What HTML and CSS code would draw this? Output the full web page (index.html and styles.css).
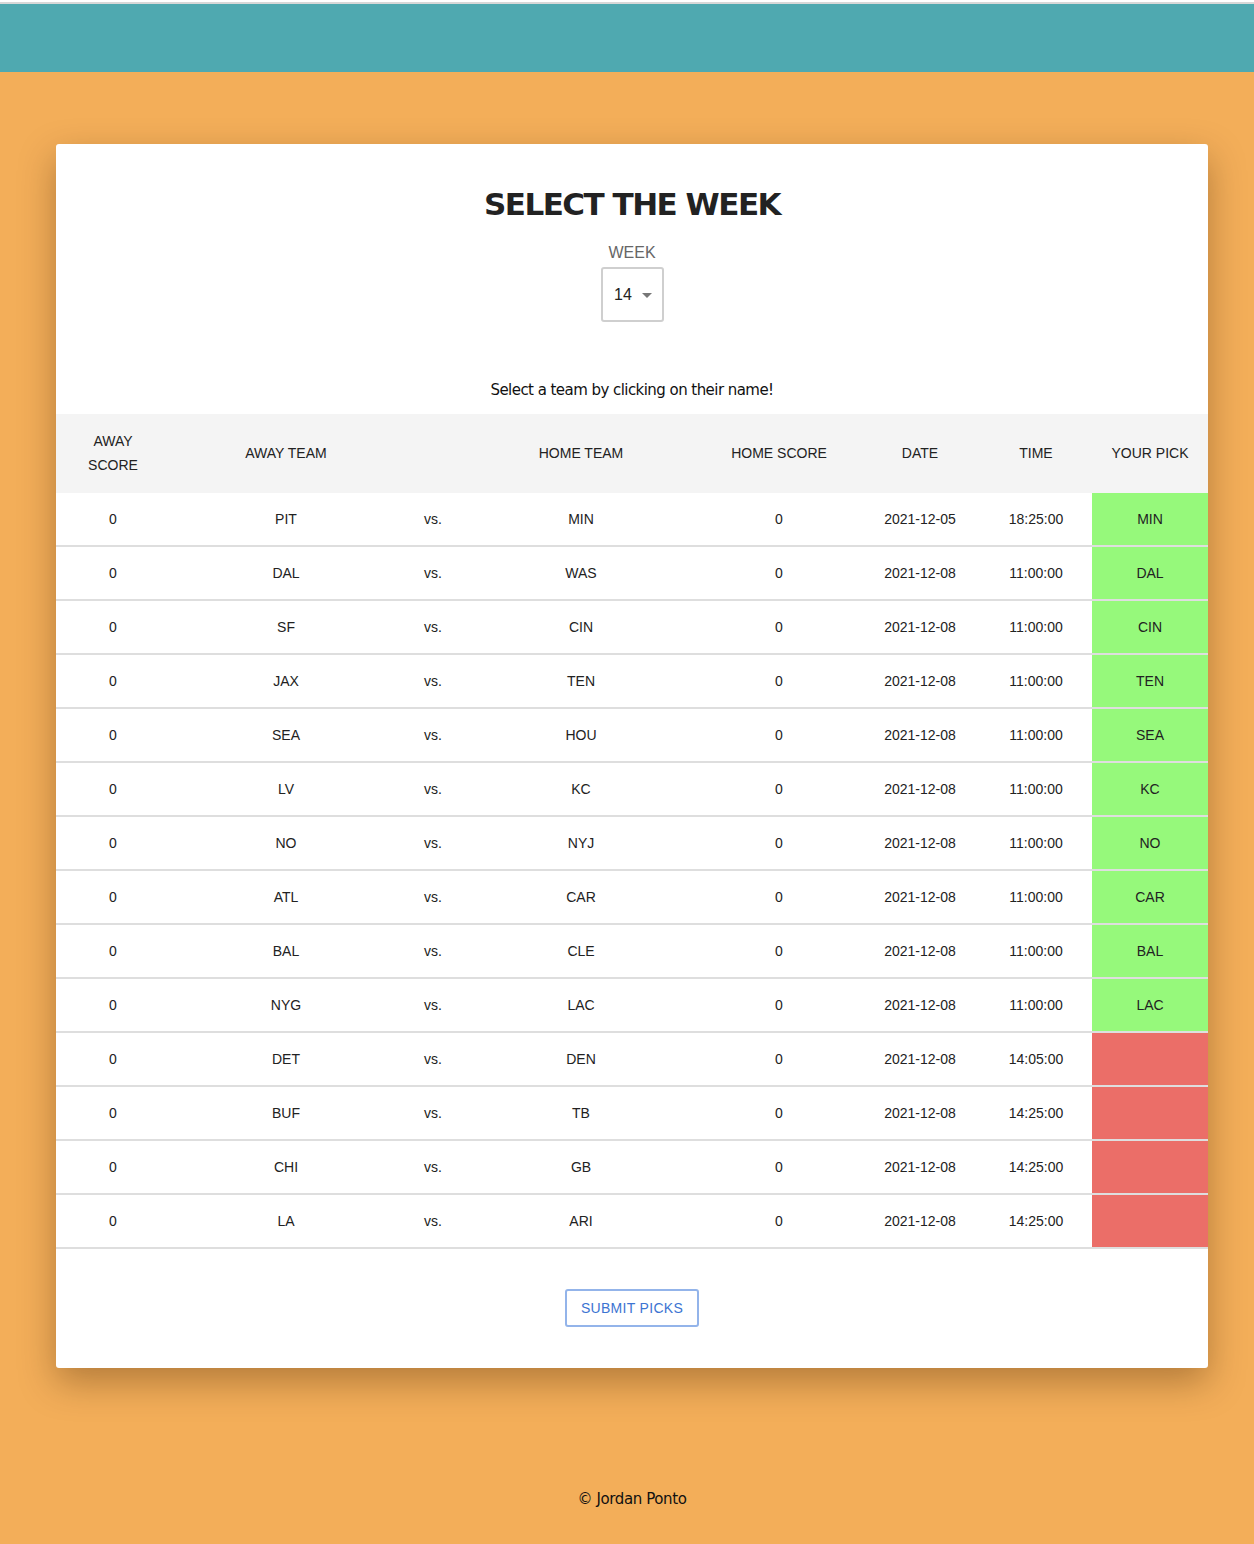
FILE: index.html
```html
<!DOCTYPE html>
<html>
<head>
<meta charset="utf-8">
<link rel="stylesheet" href="styles.css">
</head>
<body>
<div class="topline"></div>
<header class="nav"></header>
<main class="main">
  <section class="card">
    <h1 class="title">SELECT THE WEEK</h1>
    <div class="week">
      <div class="week-label">WEEK</div>
      <div class="select"><span class="select-value">14</span><span class="caret"></span></div>
    </div>
    <p class="hint">Select a team by clicking on their name!</p>
    <table class="games">
      <colgroup>
        <col class="c1"><col class="c2"><col class="c3"><col class="c4"><col class="c5"><col class="c6"><col class="c7"><col class="c8">
      </colgroup>
      <thead>
        <tr><th>AWAY SCORE</th><th>AWAY TEAM</th><th></th><th>HOME TEAM</th><th>HOME SCORE</th><th>DATE</th><th>TIME</th><th>YOUR PICK</th></tr>
      </thead>
      <tbody>
        <tr><td>0</td><td>PIT</td><td>vs.</td><td>MIN</td><td>0</td><td>2021-12-05</td><td>18:25:00</td><td class="pick ok">MIN</td></tr>
        <tr><td>0</td><td>DAL</td><td>vs.</td><td>WAS</td><td>0</td><td>2021-12-08</td><td>11:00:00</td><td class="pick ok">DAL</td></tr>
        <tr><td>0</td><td>SF</td><td>vs.</td><td>CIN</td><td>0</td><td>2021-12-08</td><td>11:00:00</td><td class="pick ok">CIN</td></tr>
        <tr><td>0</td><td>JAX</td><td>vs.</td><td>TEN</td><td>0</td><td>2021-12-08</td><td>11:00:00</td><td class="pick ok">TEN</td></tr>
        <tr><td>0</td><td>SEA</td><td>vs.</td><td>HOU</td><td>0</td><td>2021-12-08</td><td>11:00:00</td><td class="pick ok">SEA</td></tr>
        <tr><td>0</td><td>LV</td><td>vs.</td><td>KC</td><td>0</td><td>2021-12-08</td><td>11:00:00</td><td class="pick ok">KC</td></tr>
        <tr><td>0</td><td>NO</td><td>vs.</td><td>NYJ</td><td>0</td><td>2021-12-08</td><td>11:00:00</td><td class="pick ok">NO</td></tr>
        <tr><td>0</td><td>ATL</td><td>vs.</td><td>CAR</td><td>0</td><td>2021-12-08</td><td>11:00:00</td><td class="pick ok">CAR</td></tr>
        <tr><td>0</td><td>BAL</td><td>vs.</td><td>CLE</td><td>0</td><td>2021-12-08</td><td>11:00:00</td><td class="pick ok">BAL</td></tr>
        <tr><td>0</td><td>NYG</td><td>vs.</td><td>LAC</td><td>0</td><td>2021-12-08</td><td>11:00:00</td><td class="pick ok">LAC</td></tr>
        <tr><td>0</td><td>DET</td><td>vs.</td><td>DEN</td><td>0</td><td>2021-12-08</td><td>14:05:00</td><td class="pick none"></td></tr>
        <tr><td>0</td><td>BUF</td><td>vs.</td><td>TB</td><td>0</td><td>2021-12-08</td><td>14:25:00</td><td class="pick none"></td></tr>
        <tr><td>0</td><td>CHI</td><td>vs.</td><td>GB</td><td>0</td><td>2021-12-08</td><td>14:25:00</td><td class="pick none"></td></tr>
        <tr><td>0</td><td>LA</td><td>vs.</td><td>ARI</td><td>0</td><td>2021-12-08</td><td>14:25:00</td><td class="pick none"></td></tr>
      </tbody>
    </table>
    <div class="actions">
      <button class="submit">SUBMIT PICKS</button>
    </div>
  </section>
  <footer class="footer">© Jordan Ponto</footer>
</main>
</body>
</html>
```
FILE: styles.css
```css
html, body {
  margin: 0;
  padding: 0;
}
body {
  background: #f3ae59;
  font-family: "DejaVu Sans", Verdana, sans-serif;
  color: #111;
  width: 1254px;
  height: 1544px;
  overflow: hidden;
}
.topline {
  height: 2px;
  background: #fff;
  border-bottom: 2px solid #d8d8d8;
}
.nav {
  height: 68px;
  background: #4fa9b0;
}
.main {
  padding-top: 72px;
  margin-left: 56px;
  width: 1152px;
}
.card {
  background: #fff;
  border-radius: 3px;
  box-shadow: 0 14px 36px rgba(60, 30, 0, 0.35);
  padding-top: 40px;
  padding-bottom: 41px;
  text-align: center;
}
.title {
  margin: 0;
  font-family: "DejaVu Sans", Verdana, sans-serif;
  font-weight: bold;
  font-size: 31px;
  line-height: 40px;
  letter-spacing: -1.5px;
  color: #222;
}
.week {
  display: flex;
  flex-direction: column;
  align-items: center;
  margin-top: 20px;
}
.week-label {
  font-family: "Liberation Sans", Arial, sans-serif;
  font-size: 16px;
  line-height: 18px;
  color: #666;
}
.select {
  margin-top: 5px;
  width: 59px;
  height: 51px;
  border: 2px solid #cfcfcf;
  border-radius: 3px;
  display: flex;
  align-items: center;
  gap: 10px;
  box-sizing: content-box;
  justify-content: center;
}
.select-value {
  font-family: "Liberation Sans", Arial, sans-serif;
  font-size: 16px;
  color: #222;
  margin-left: 2px;
}
.caret {
  width: 0;
  height: 0;
  border-left: 5px solid transparent;
  border-right: 5px solid transparent;
  border-top: 5px solid #777;
  margin-top: 2px;
}
.hint {
  margin: 58px 0 14px;
  font-family: "DejaVu Sans", Tahoma, sans-serif;
  font-size: 15px;
  line-height: 20px;
  letter-spacing: -0.55px;
  color: #111;
}
.games {
  width: 1152px;
  border-collapse: collapse;
  table-layout: fixed;
  font-family: "Liberation Sans", Arial, sans-serif;
  font-size: 14px;
  color: #222;
}
.c1 { width: 114px; }
.c2 { width: 232px; }
.c3 { width: 62px; }
.c4 { width: 234px; }
.c5 { width: 162px; }
.c6 { width: 120px; }
.c7 { width: 112px; }
.c8 { width: 116px; }
.games thead tr {
  background: #f4f4f4;
}
.games th {
  font-weight: normal;
  padding: 15px 8px 16px;
  line-height: 24px;
  text-align: center;
}
.games th:first-child {
  padding-left: 24px;
  padding-right: 24px;
}
.games td {
  padding: 16px 8px;
  line-height: 20px;
  height: 20px;
  text-align: center;
  border-bottom: 2px solid #dedede;
}
.games td.ok {
  background: #96f97b;
}
.games td.none {
  background: #eb6e68;
}
.actions {
  padding-top: 40px;
}
.submit {
  width: 134px;
  height: 38px;
  background: #fff;
  border: 2px solid #93b4ea;
  border-radius: 3px;
  font-family: "Liberation Sans", Arial, sans-serif;
  font-size: 14px;
  letter-spacing: 0.3px;
  color: #3c74d2;
  padding: 0;
}
.footer {
  margin-top: 121px;
  text-align: center;
  font-family: "DejaVu Sans", Tahoma, sans-serif;
  font-size: 15px;
  letter-spacing: -0.4px;
  line-height: 20px;
  color: #111;
}
```
